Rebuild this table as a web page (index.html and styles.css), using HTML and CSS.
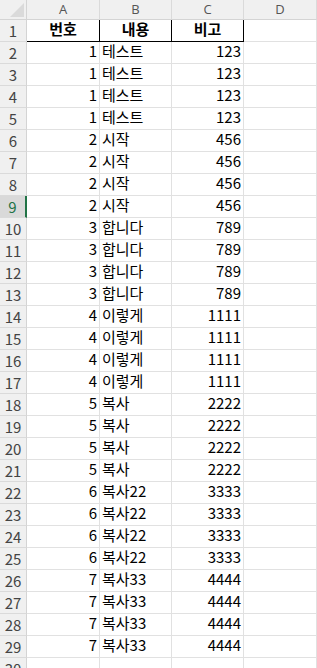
FILE: index.html
```html
<!DOCTYPE html>
<html lang="ko">
<head>
<meta charset="utf-8">
<link rel="stylesheet" href="styles.css">
</head>
<body>
<div class="sheet">
  <div class="corner"><span class="tri"></span></div>
  <div class="colhead">A</div>
  <div class="colhead">B</div>
  <div class="colhead">C</div>
  <div class="colhead">D</div>

  <div class="rowhead">1</div>
  <div class="cell title">번호</div>
  <div class="cell title">내용</div>
  <div class="cell title">비고</div>
  <div class="cell"></div>

  <div class="rowhead">2</div><div class="cell num">1</div><div class="cell">테스트</div><div class="cell num">123</div><div class="cell"></div>
  <div class="rowhead">3</div><div class="cell num">1</div><div class="cell">테스트</div><div class="cell num">123</div><div class="cell"></div>
  <div class="rowhead">4</div><div class="cell num">1</div><div class="cell">테스트</div><div class="cell num">123</div><div class="cell"></div>
  <div class="rowhead">5</div><div class="cell num">1</div><div class="cell">테스트</div><div class="cell num">123</div><div class="cell"></div>
  <div class="rowhead">6</div><div class="cell num">2</div><div class="cell">시작</div><div class="cell num">456</div><div class="cell"></div>
  <div class="rowhead">7</div><div class="cell num">2</div><div class="cell">시작</div><div class="cell num">456</div><div class="cell"></div>
  <div class="rowhead">8</div><div class="cell num">2</div><div class="cell">시작</div><div class="cell num">456</div><div class="cell"></div>
  <div class="rowhead active">9</div><div class="cell num">2</div><div class="cell">시작</div><div class="cell num">456</div><div class="cell"></div>
  <div class="rowhead">10</div><div class="cell num">3</div><div class="cell">합니다</div><div class="cell num">789</div><div class="cell"></div>
  <div class="rowhead">11</div><div class="cell num">3</div><div class="cell">합니다</div><div class="cell num">789</div><div class="cell"></div>
  <div class="rowhead">12</div><div class="cell num">3</div><div class="cell">합니다</div><div class="cell num">789</div><div class="cell"></div>
  <div class="rowhead">13</div><div class="cell num">3</div><div class="cell">합니다</div><div class="cell num">789</div><div class="cell"></div>
  <div class="rowhead">14</div><div class="cell num">4</div><div class="cell">이렇게</div><div class="cell num">1111</div><div class="cell"></div>
  <div class="rowhead">15</div><div class="cell num">4</div><div class="cell">이렇게</div><div class="cell num">1111</div><div class="cell"></div>
  <div class="rowhead">16</div><div class="cell num">4</div><div class="cell">이렇게</div><div class="cell num">1111</div><div class="cell"></div>
  <div class="rowhead">17</div><div class="cell num">4</div><div class="cell">이렇게</div><div class="cell num">1111</div><div class="cell"></div>
  <div class="rowhead">18</div><div class="cell num">5</div><div class="cell">복사</div><div class="cell num">2222</div><div class="cell"></div>
  <div class="rowhead">19</div><div class="cell num">5</div><div class="cell">복사</div><div class="cell num">2222</div><div class="cell"></div>
  <div class="rowhead">20</div><div class="cell num">5</div><div class="cell">복사</div><div class="cell num">2222</div><div class="cell"></div>
  <div class="rowhead">21</div><div class="cell num">5</div><div class="cell">복사</div><div class="cell num">2222</div><div class="cell"></div>
  <div class="rowhead">22</div><div class="cell num">6</div><div class="cell">복사22</div><div class="cell num">3333</div><div class="cell"></div>
  <div class="rowhead">23</div><div class="cell num">6</div><div class="cell">복사22</div><div class="cell num">3333</div><div class="cell"></div>
  <div class="rowhead">24</div><div class="cell num">6</div><div class="cell">복사22</div><div class="cell num">3333</div><div class="cell"></div>
  <div class="rowhead">25</div><div class="cell num">6</div><div class="cell">복사22</div><div class="cell num">3333</div><div class="cell"></div>
  <div class="rowhead">26</div><div class="cell num">7</div><div class="cell">복사33</div><div class="cell num">4444</div><div class="cell"></div>
  <div class="rowhead">27</div><div class="cell num">7</div><div class="cell">복사33</div><div class="cell num">4444</div><div class="cell"></div>
  <div class="rowhead">28</div><div class="cell num">7</div><div class="cell">복사33</div><div class="cell num">4444</div><div class="cell"></div>
  <div class="rowhead">29</div><div class="cell num">7</div><div class="cell">복사33</div><div class="cell num">4444</div><div class="cell"></div>
  <div class="rowhead">30</div><div class="cell"></div><div class="cell"></div><div class="cell"></div><div class="cell"></div>
</div>
</body>
</html>
```
FILE: styles.css
```css
html, body {
  margin: 0;
  padding: 0;
  background: #ffffff;
}
body {
  font-family: "Noto Sans CJK KR", "Noto Sans", sans-serif;
  width: 317px;
}
.sheet {
  display: grid;
  grid-template-columns: 27px 73px 72px 72px 73px;
  grid-template-rows: 20px;
  grid-auto-rows: 22px;
}
.sheet > div {
  box-sizing: border-box;
  border-right: 1px solid #e1e1e1;
  border-bottom: 1px solid #e1e1e1;
  white-space: nowrap;
}
.corner {
  position: relative;
  background: #f0f0f0;
  border-right-color: #d4d4d4 !important;
  border-bottom-color: #d4d4d4 !important;
}
.tri {
  position: absolute;
  right: 2px;
  bottom: 2px;
  width: 0;
  height: 0;
  border-left: 14px solid transparent;
  border-bottom: 14px solid #dadada;
}
.colhead {
  background: #f0f0f0;
  color: #555555;
  font-family: "Open Sans", "Noto Sans CJK KR", sans-serif;
  font-size: 13px;
  line-height: 19px;
  text-align: center;
  border-right-color: #dadada !important;
  border-bottom-color: #d4d4d4 !important;
}
.rowhead {
  background: #f0f0f0;
  color: #444444;
  font-size: 15px;
  line-height: 21px;
  text-align: center;
  border-right-color: #d4d4d4 !important;
  border-bottom-color: #dadada !important;
}
.rowhead.active {
  background: #d9d9d9;
  color: #217346;
  border-right: 2px solid #217346 !important;
}
.cell {
  background: #ffffff;
  color: #000000;
  font-size: 15px;
  line-height: 17px;
  padding: 0 2px;
}
.num {
  text-align: right;
}
.title {
  font-weight: bold;
  text-align: center;
  border-right-color: #000000 !important;
  border-bottom-color: #000000 !important;
}
```
